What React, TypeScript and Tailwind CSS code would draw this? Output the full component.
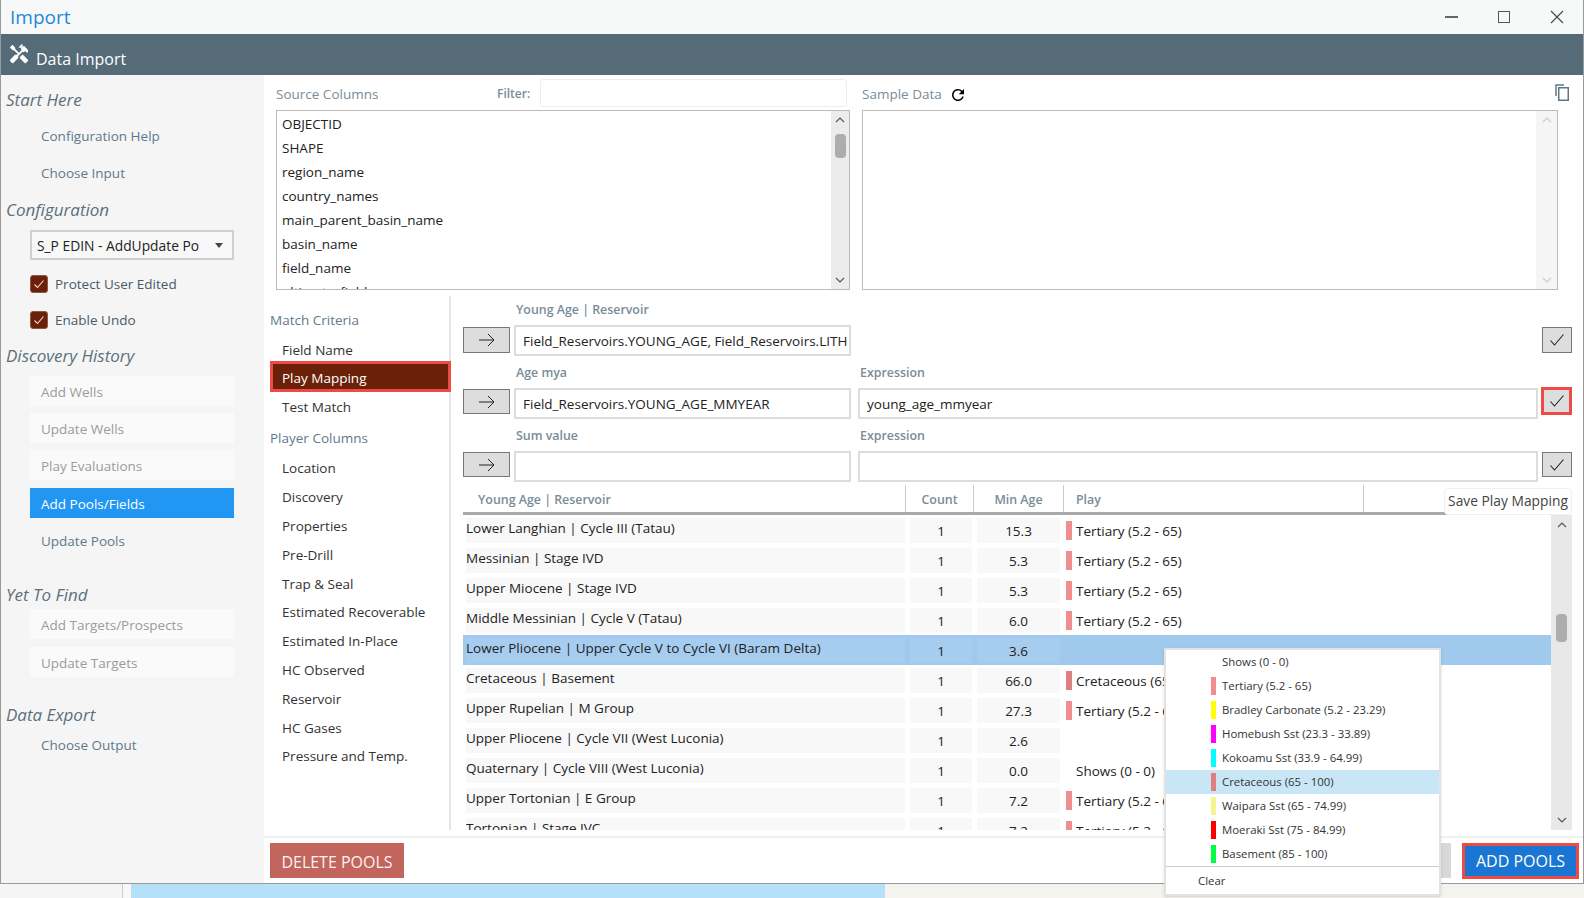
import { MdHandyman, MdRefresh } from 'react-icons/md';

const FONT = "font-['Open_Sans',_'Noto_Sans',_sans-serif]";

const sourceColumns = [
  'OBJECTID',
  'SHAPE',
  'region_name',
  'country_names',
  'main_parent_basin_name',
  'basin_name',
  'field_name',
  'ultimate_field',
];

const playerColumns = [
  { label: 'Location', h: 'h-[29px]' },
  { label: 'Discovery', h: 'h-[29px]' },
  { label: 'Properties', h: 'h-[29px]' },
  { label: 'Pre-Drill', h: 'h-[29px]' },
  { label: 'Trap & Seal', h: 'h-[28px]' },
  { label: 'Estimated Recoverable', h: 'h-[29px]' },
  { label: 'Estimated In-Place', h: 'h-[29px]' },
  { label: 'HC Observed', h: 'h-[29px]' },
  { label: 'Reservoir', h: 'h-[29px]' },
  { label: 'HC Gases', h: 'h-[28px]' },
  { label: 'Pressure and Temp.', h: 'h-[29px]' },
];

type Row = {
  name: string;
  min: string;
  play?: string;
  color?: string;
  selected?: boolean;
};

const TERT = 'Tertiary (5.2 - 65)';

const rows: Row[] = [
  { name: 'Lower Langhian | Cycle III (Tatau)', min: '15.3', play: TERT, color: '#f08d8f' },
  { name: 'Messinian | Stage IVD', min: '5.3', play: TERT, color: '#f08d8f' },
  { name: 'Upper Miocene | Stage IVD', min: '5.3', play: TERT, color: '#f08d8f' },
  { name: 'Middle Messinian | Cycle V (Tatau)', min: '6.0', play: TERT, color: '#f08d8f' },
  { name: 'Lower Pliocene | Upper Cycle V to Cycle VI (Baram Delta)', min: '3.6', selected: true },
  { name: 'Cretaceous | Basement', min: '66.0', play: 'Cretaceous (65 - 100)', color: '#de7f82' },
  { name: 'Upper Rupelian | M Group', min: '27.3', play: TERT, color: '#f08d8f' },
  { name: 'Upper Pliocene | Cycle VII (West Luconia)', min: '2.6' },
  { name: 'Quaternary | Cycle VIII (West Luconia)', min: '0.0', play: 'Shows (0 - 0)' },
  { name: 'Upper Tortonian | E Group', min: '7.2', play: TERT, color: '#f08d8f' },
  { name: 'Tortonian | Stage IVC', min: '7.2', play: TERT, color: '#f08d8f' },
];

const plays = [
  { label: 'Shows (0 - 0)' },
  { label: 'Tertiary (5.2 - 65)', color: '#f08d8f' },
  { label: 'Bradley Carbonate (5.2 - 23.29)', color: '#ffff00' },
  { label: 'Homebush Sst (23.3 - 33.89)', color: '#ff00ff' },
  { label: 'Kokoamu Sst (33.9 - 64.99)', color: '#00ffff' },
  { label: 'Cretaceous (65 - 100)', color: '#de7f82', active: true },
  { label: 'Waipara Sst (65 - 74.99)', color: '#f3f58f' },
  { label: 'Moeraki Sst (75 - 84.99)', color: '#ff0000' },
  { label: 'Basement (85 - 100)', color: '#00ff40' },
];

function SideHeading({ children, className }: { children: string; className: string }) {
  return <div className={`pl-[5px] text-[17px] leading-[24px] italic text-[#5c707c] ${className}`}>{children}</div>;
}

function SideLink({ children, className }: { children: string; className: string }) {
  return <div className={`pl-[40px] h-[30px] flex items-center text-[13.5px] text-[#62798a] ${className}`}>{children}</div>;
}

function SideDisabled({ children, className }: { children: string; className: string }) {
  return (
    <div className={`ml-[29px] w-[204px] h-[30px] pl-[11px] pt-[2px] flex items-center bg-[#fafafa] text-[13.5px] text-[#9b9b9b] ${className}`}>
      {children}
    </div>
  );
}

function Check({ label, className }: { label: string; className: string }) {
  return (
    <div className={`ml-[29px] flex items-center gap-[7px] h-[18px] ${className}`}>
      <div className="w-[18px] h-[18px] rounded-[3px] bg-[#6b2108] border border-[#8a5a48] flex items-center justify-center">
        <svg width="14" height="14" viewBox="0 0 14 14" fill="none" stroke="#f3dcd2" strokeWidth="1.1">
          <path d="M2.5 7.5 L5.5 10.5 L11.5 3.5" />
        </svg>
      </div>
      <span className="text-[13.5px] text-[#4a5a66]">{label}</span>
    </div>
  );
}

function ArrowButton({ className }: { className: string }) {
  return (
    <button className={`w-[47px] bg-[#dddddd] border border-[#777] flex items-center justify-center shrink-0 ${className}`}>
      <svg width="18" height="14" viewBox="0 0 18 14" fill="none" stroke="#222" strokeWidth="1">
        <path d="M1 7 H16 M10 1 L16 7 L10 13" />
      </svg>
    </button>
  );
}

function CheckButton({ className }: { className: string }) {
  return (
    <button className={`bg-[#dddddd] flex items-center justify-center shrink-0 ${className}`}>
      <svg width="16" height="14" viewBox="0 0 16 14" fill="none" stroke="#222" strokeWidth="1.1">
        <path d="M1.5 7.5 L5.5 12 L14.5 1.5" />
      </svg>
    </button>
  );
}

function FieldLabel({ children, className }: { children: string; className: string }) {
  return <div className={`text-[12.4px] leading-[18px] font-semibold text-[#7a8c98] ${className}`}>{children}</div>;
}

function TextBox({ value, className }: { value?: string; className: string }) {
  return (
    <div className={`border-2 border-[#dcdcdc] bg-white flex items-center pl-[7px] pt-[2px] text-[13.5px] text-[#222] whitespace-nowrap overflow-hidden ${className}`}>
      {value}
    </div>
  );
}

function ScrollChevron({ up, color = '#555' }: { up?: boolean; color?: string }) {
  return (
    <svg width="10" height="6" viewBox="0 0 10 6" fill="none" stroke={color} strokeWidth="1.1">
      <path d={up ? 'M1 5 L5 1 L9 5' : 'M1 1 L5 5 L9 1'} />
    </svg>
  );
}

export default function App() {
  return (
    <div className={`${FONT} relative w-[1584px] h-[898px] overflow-hidden bg-[#f5f5f5] flex flex-col`}>
      <div className="h-[884px] flex flex-col border-l border-r border-b border-[#9a9a9a] bg-white shadow-md">
        {/* Title bar */}
        <div className="h-[34px] shrink-0 bg-[#f7f9f8] flex items-center justify-between pl-[9px] pr-[19px]">
          <span className="text-[19px] text-[#1e88d8]">Import</span>
          <div className="flex items-center gap-[40px]">
            <div className="w-[13px] h-[1.5px] bg-[#666]" />
            <div className="w-[12px] h-[12px] border-[1.5px] border-[#555]" />
            <svg width="14" height="14" viewBox="0 0 14 14" fill="none" stroke="#444" strokeWidth="1.1">
              <path d="M1 1 L13 13 M13 1 L1 13" />
            </svg>
          </div>
        </div>

        {/* Header */}
        <div className="h-[41px] shrink-0 bg-[#566b78] flex items-center gap-[6px] pl-[7px] text-white">
          <MdHandyman className="w-[22px] h-[22px] -mt-[1px]" />
          <span className="text-[16px] mt-[8px]">Data Import</span>
        </div>

        <div className="flex-1 flex min-h-0">
          {/* Left nav */}
          <div className="w-[263px] shrink-0 bg-[#f5f5f5] flex flex-col">
            <SideHeading className="mt-[13px]">Start Here</SideHeading>
            <SideLink className="mt-[9px]">Configuration Help</SideLink>
            <SideLink className="mt-[7px]">Choose Input</SideLink>
            <SideHeading className="mt-[10px]">Configuration</SideHeading>
            <div className="ml-[29px] mt-[8px] w-[204px] h-[30px] border-2 border-[#cfcfcf] bg-[#f8f8f8] flex items-center justify-between pl-[5px] pr-[9px]">
              <span className="text-[13.8px] text-[#222] pt-[2px]">S_P EDIN - AddUpdate Po</span>
              <div className="w-0 h-0 border-l-[4px] border-r-[4px] border-t-[5px] border-l-transparent border-r-transparent border-t-[#444]" />
            </div>
            <Check className="mt-[15px]" label="Protect User Edited" />
            <Check className="mt-[18px]" label="Enable Undo" />
            <SideHeading className="mt-[15px]">Discovery History</SideHeading>
            <SideDisabled className="mt-[8px]">Add Wells</SideDisabled>
            <SideDisabled className="mt-[7px]">Update Wells</SideDisabled>
            <SideDisabled className="mt-[7px]">Play Evaluations</SideDisabled>
            <div className="ml-[29px] mt-[8px] w-[204px] h-[30px] pl-[11px] pt-[2px] flex items-center bg-[#2196f3] text-[13.5px] text-white">
              Add Pools/Fields
            </div>
            <SideLink className="mt-[8px]">Update Pools</SideLink>
            <SideHeading className="mt-[27px]">Yet To Find</SideHeading>
            <SideDisabled className="mt-[2px]">Add Targets/Prospects</SideDisabled>
            <SideDisabled className="mt-[8px]">Update Targets</SideDisabled>
            <SideHeading className="mt-[26px]">Data Export</SideHeading>
            <SideLink className="mt-[3px]">Choose Output</SideLink>
          </div>

          {/* Main */}
          <div className="flex-1 min-w-0 flex flex-col">
            {/* Source and sample */}
            <div className="h-[221px] shrink-0 flex pl-[12px]">
              <div className="w-[574px] shrink-0 flex flex-col">
                <div className="h-[35px] flex items-center">
                  <span className="text-[13.5px] text-[#7a8c98] w-[221px] mt-[4px]">Source Columns</span>
                  <span className="text-[12px] font-semibold text-[#7a8c98] w-[43px] mt-[3px]">Filter:</span>
                  <div className="w-[307px] h-[28px] mt-[1px] border border-[#eeeeee] rounded-[3px] bg-white" />
                </div>
                <div className="h-[180px] border border-[#bbbbbb] flex overflow-hidden">
                  <div className="flex-1 pl-[5px] pt-[1px] overflow-hidden">
                    {sourceColumns.map((c) => (
                      <div key={c} className="h-[24px] flex items-center text-[13.5px] text-[#222]">{c}</div>
                    ))}
                  </div>
                  <div className="w-[18px] bg-[#ececec] flex flex-col items-center justify-between py-[6px] relative">
                    <ScrollChevron up />
                    <div className="absolute top-[23px] w-[11px] h-[24px] rounded-[4px] bg-[#adadad]" />
                    <ScrollChevron />
                  </div>
                </div>
              </div>
              <div className="flex-1 ml-[12px] mr-[25px] flex flex-col">
                <div className="h-[35px] flex items-center justify-between">
                  <div className="flex items-center gap-[7px] mt-[4px]">
                    <span className="text-[13.5px] text-[#7a8c98]">Sample Data</span>
                    <MdRefresh className="w-[18px] h-[18px] text-black" />
                  </div>
                  <svg width="14" height="17" viewBox="0 0 14 17" fill="none" stroke="#5f7887" strokeWidth="1.5" className="-mr-[11px]">
                    <path d="M1 12 V1 H9" />
                    <rect x="3.75" y="3.75" width="9.5" height="12.5" />
                  </svg>
                </div>
                <div className="h-[180px] border border-[#bbbbbb] flex justify-end">
                  <div className="w-[21px] bg-[#f5f5f5] flex flex-col items-center justify-between py-[6px]">
                    <ScrollChevron up color="#ccc" />
                    <ScrollChevron color="#ccc" />
                  </div>
                </div>
              </div>
            </div>

            <div className="flex-1 min-h-0 flex">
              {/* Criteria list */}
              <div className="w-[187px] shrink-0 h-[534px] border-r-2 border-[#e6e6e6] pl-[6px]">
                <div className="h-[20px] mt-[14px] flex items-center text-[13.5px] text-[#62798a]">Match Criteria</div>
                <div className="h-[30px] mt-[1px] pt-[8px] flex items-center pl-[12px] text-[13.5px] text-[#333]">Field Name</div>
                <div className="h-[31px] w-[181px] border-[3px] border-[#ee4b47] bg-[#6b2108] pt-[3px] flex items-center pl-[9px] text-[13.5px] text-white">Play Mapping</div>
                <div className="h-[30px] flex items-center pl-[12px] text-[13.5px] text-[#333]">Test Match</div>
                <div className="h-[30px] mt-[1px] flex items-center text-[13.5px] text-[#62798a]">Player Columns</div>
                <div className="mt-[1px]">
                  {playerColumns.map((p) => (
                    <div key={p.label} className={`${p.h} flex items-center pl-[12px] text-[13.5px] text-[#333]`}>{p.label}</div>
                  ))}
                </div>
              </div>

              {/* Mapping */}
              <div className="flex-1 min-w-0 flex flex-col pl-[12px]">
                <div className="flex pl-[53px] mt-[5px]"><FieldLabel className="">Young Age | Reservoir</FieldLabel></div>
                <div className="flex items-center h-[31px] mt-[6px]">
                  <ArrowButton className="h-[26px] -mt-[2px]" />
                  <TextBox className="ml-[4px] w-[337px] h-[31px]" value="Field_Reservoirs.YOUNG_AGE, Field_Reservoirs.LITH" />
                  <div className="flex-1" />
                  <CheckButton className="w-[30px] h-[26px] -mt-[2px] border border-[#777] mr-[11px]" />
                </div>
                <div className="flex h-[18px] mt-[8px] pl-[53px]">
                  <FieldLabel className="w-[344px]">Age mya</FieldLabel>
                  <FieldLabel className="">Expression</FieldLabel>
                </div>
                <div className="flex items-center h-[31px] mt-[6px]">
                  <ArrowButton className="h-[25px] -mt-[4px]" />
                  <TextBox className="ml-[4px] w-[337px] h-[31px]" value="Field_Reservoirs.YOUNG_AGE_MMYEAR" />
                  <TextBox className="ml-[7px] w-[680px] h-[31px]" value="young_age_mmyear" />
                  <CheckButton className="ml-[3px] w-[31px] h-[28px] -mt-[5px] border-[3px] border-[#ee4b47]" />
                </div>
                <div className="flex h-[18px] mt-[8px] pl-[53px]">
                  <FieldLabel className="w-[344px]">Sum value</FieldLabel>
                  <FieldLabel className="">Expression</FieldLabel>
                </div>
                <div className="flex items-center h-[31px] mt-[6px]">
                  <ArrowButton className="h-[25px] -mt-[4px]" />
                  <TextBox className="ml-[4px] w-[337px] h-[31px]" />
                  <TextBox className="ml-[7px] w-[680px] h-[31px]" />
                  <CheckButton className="ml-[4px] w-[30px] h-[25px] -mt-[4px] border border-[#777]" />
                </div>

                {/* Table */}
                <div className="relative flex-1 min-h-0 flex flex-col mt-[3px] mr-[11px]">
                  <div className="flex h-[30px] shrink-0 border-b-[3px] border-[#aaaaaa] mr-[21px] text-[12.4px] font-semibold text-[#7a8c98]">
                    <div className="w-[443px] pl-[15px] pt-[4px] flex items-center border-r border-[#cccccc]">Young Age | Reservoir</div>
                    <div className="w-[68px] pt-[4px] flex items-center justify-center border-r border-[#cccccc]">Count</div>
                    <div className="w-[90px] pt-[4px] flex items-center justify-center border-r border-[#cccccc]">Min Age</div>
                    <div className="w-[300px] pl-[12px] pt-[4px] flex items-center border-r border-[#cccccc]">Play</div>
                  </div>
                  <div className="flex-1 min-h-0 flex">
                    <div className="flex-1 min-w-0 overflow-hidden">
                      {rows.map((r) => (
                        <div key={r.name} className={`h-[30px] flex items-center text-[13.5px] text-[#222] ${r.selected ? 'bg-[#9fcaee]' : ''}`}>
                          <div className={`ml-[3px] w-[439px] h-[25px] pb-[3px] flex items-center whitespace-nowrap overflow-hidden ${r.selected ? 'bg-[#a6cdef]' : 'bg-[#f8f8f8]'}`}>{r.name}</div>
                          <div className={`ml-[5px] w-[62px] h-[25px] pt-[2px] flex items-center justify-center ${r.selected ? 'bg-[#a6cdef]' : 'bg-[#f8f8f8]'}`}>1</div>
                          <div className={`ml-[5px] w-[83px] h-[25px] pt-[2px] flex items-center justify-center ${r.selected ? 'bg-[#a6cdef]' : 'bg-[#f8f8f8]'}`}>{r.min}</div>
                          <div className="ml-[6px] mt-[1px] w-[6px] h-[19px] shrink-0" style={{ backgroundColor: r.color }} />
                          <div className="ml-[4px] pt-[2px] whitespace-nowrap">{r.play}</div>
                        </div>
                      ))}
                    </div>
                    <div className="w-[21px] shrink-0 bg-[#e8e8e8] relative flex flex-col items-center justify-between py-[7px]">
                      <ScrollChevron up />
                      <div className="absolute top-[99px] w-[11px] h-[28px] rounded-[4px] bg-[#adadad]" />
                      <ScrollChevron />
                    </div>
                  </div>
                  <div className="absolute top-[3px] right-0 w-[128px] h-[27px] bg-white border border-[#f0f0f0] rounded-[4px] flex items-center justify-center text-[13.8px] text-[#444]">
                    Save Play Mapping
                  </div>
                </div>
                <div className="h-[6px] shrink-0" />
              </div>
            </div>

            {/* Footer */}
            <div className="h-[47px] shrink-0 border-t-2 border-[#f0f0f0] flex items-center justify-between pl-[6px] pr-[4px]">
              <button className="w-[134px] h-[35px] pt-[2px] bg-[#c1655d] text-[16px] text-[#fdf2f0]">DELETE POOLS</button>
              <div className="flex items-center gap-[11px]">
                <div className="w-[60px] h-[35px] bg-[#d8d8d8]" />
                <button className="w-[117px] h-[36px] pt-[1px] bg-[#1976d2] border-[3px] border-[#ee4b47] text-[16px] text-white">ADD POOLS</button>
              </div>
            </div>
          </div>
        </div>
      </div>

      {/* Desktop map behind the window */}
      <div className="flex-1 flex">
        <div className="w-[123px] bg-[#f5f5f5] border-r border-[#cccccc]" />
        <div className="w-[8px] bg-[#f8f8f8]" />
        <div className="w-[754px] bg-[#b5e0f8]" />
        <div className="flex-1 bg-[#f4f3ee]" />
      </div>

      {/* Play dropdown */}
      <div className="absolute left-[1164px] top-[648px] w-[277px] h-[248px] bg-white border-2 border-[#e2e2e2] shadow-sm">
        {plays.map((p) => (
          <div key={p.label} className={`h-[24px] flex items-center text-[11.4px] text-[#333] ${p.active ? 'bg-[#c9e6f6]' : ''}`}>
            <div className="ml-[45px] w-[5px] h-[18px] shrink-0" style={{ backgroundColor: p.color }} />
            <span className="ml-[6px] whitespace-nowrap">{p.label}</span>
          </div>
        ))}
        <div className="h-[1px] bg-[#cccccc]" />
        <div className="h-[28px] pl-[32px] flex items-center text-[11.4px] text-[#333]">Clear</div>
      </div>
    </div>
  );
}
